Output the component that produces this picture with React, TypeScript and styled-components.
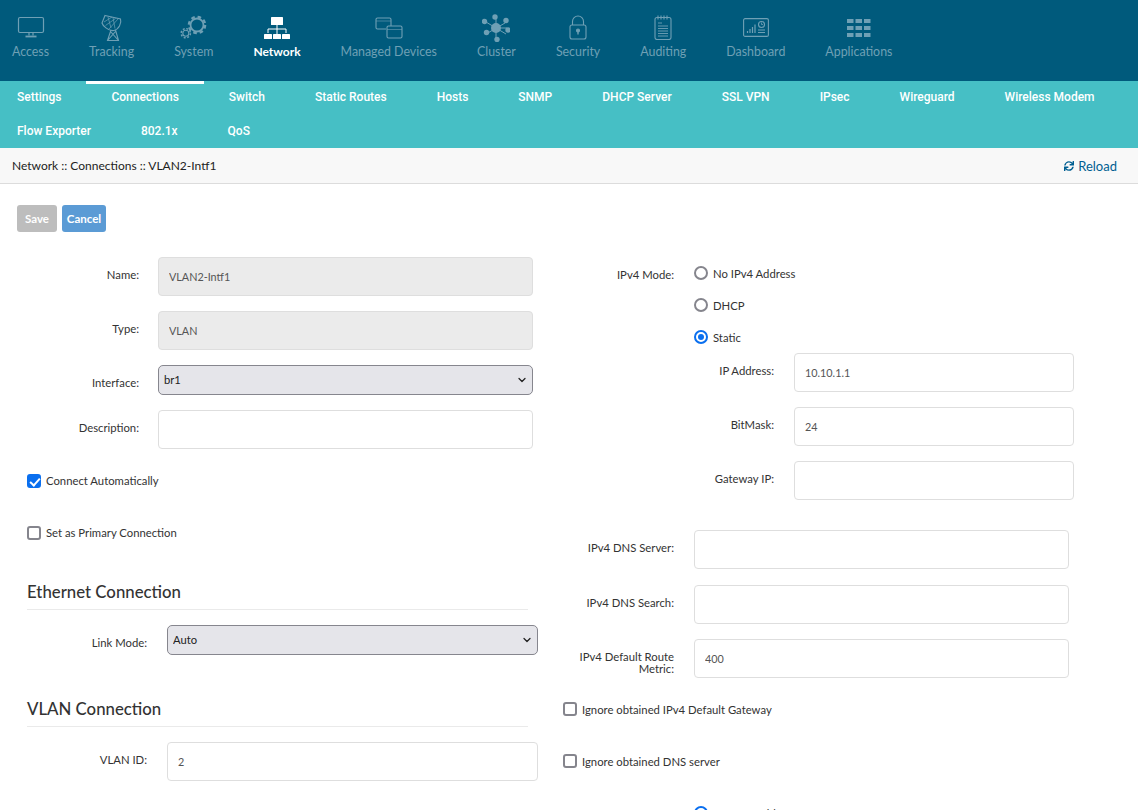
import styled, { createGlobalStyle } from 'styled-components';
import { FaSync } from 'react-icons/fa';
import { ChevronDown } from 'lucide-react';

const GlobalStyle = createGlobalStyle`
  html, body {
    margin: 0;
    height: 810px;
    overflow: hidden;
    background: #fff;
    font-family: Lato, "Liberation Sans", sans-serif;
    font-size: 11.3px;
    color: #333;
  }
  * { box-sizing: border-box; }
`;

const dim = '#6fa0b5';

const MonitorIcon = () => (
  <svg width="28" height="24" viewBox="0 0 28 24" fill="none" stroke="currentColor" strokeWidth="1.2">
    <rect x="1.5" y="1.5" width="25" height="15" rx="1.5" />
    <path d="M12 17v2.5M16 17v2.5" />
    <path d="M8.5 20.5h11" strokeWidth="1.8" />
  </svg>
);

const DishIcon = () => (
  <svg width="24" height="28" viewBox="0 0 24 28" fill="none" stroke="currentColor" strokeWidth="1.1">
    <path d="M5 1.5l15.5 3.5c1.5 4.5-2 10.5-6.5 11.5C8 17.5 2.5 11 2 9z" />
    <path d="M4 8l8-5M5.5 11.5l10-7M9 15l9-10M8 3l3 11M13 3.5l2 11" strokeWidth=".7" />
    <path d="M11 16l-3.5 10.5h11L15.5 16M7.5 26.5l8-9M18.5 26.5l-8-9" />
  </svg>
);

const GearsIcon = () => (
  <svg width="28" height="26" viewBox="0 0 28 26" fill="none" stroke="currentColor">
    <circle cx="17" cy="10" r="6.5" strokeWidth="1.8" />
    <circle cx="17" cy="10" r="8.2" strokeWidth="2.2" strokeDasharray="3.6 2.9" />
    <circle cx="5.8" cy="18.2" r="3" strokeWidth="1.1" />
    <circle cx="5.8" cy="18.2" r="4.6" strokeWidth="1.5" strokeDasharray="2 1.6" />
  </svg>
);

const SitemapIcon = () => (
  <svg width="26" height="22" viewBox="0 0 26 22" fill="currentColor">
    <rect x="7" y="0" width="12" height="8" rx=".6" />
    <rect x="0" y="17" width="8" height="5" rx=".6" />
    <rect x="9" y="17" width="8" height="5" rx=".6" />
    <rect x="18" y="17" width="8" height="5" rx=".6" />
    <path d="M13 8v9M4 16v-4h18v4" fill="none" stroke="currentColor" strokeWidth="1" />
  </svg>
);

const DevicesIcon = () => (
  <svg width="28" height="22" viewBox="0 0 28 22" fill="none" stroke="currentColor" strokeWidth="1.1">
    <path d="M11 12H2.5A1.5 1.5 0 0 1 1 10.500V2.500A1.500 1.500 0 0 1 2.500 1h12A1.500 1.500 0 0 1 16 2.500V9" />
    <rect x="12" y="9" width="15" height="12" rx="1.5" />
    <path d="M12 12.500h15M1 4h15" strokeWidth=".6" />
  </svg>
);

const ClusterIcon = () => (
  <svg width="28" height="28" viewBox="0 0 28 28" fill="currentColor" stroke="currentColor">
    <circle cx="14" cy="14" r="5" stroke="none" />
    <path d="M14 3v22M4 8l20 12M4 20l19-11M14 14l11 0" strokeWidth="1" fill="none" />
    <circle cx="13" cy="3" r="2.700" stroke="none" />
    <circle cx="24" cy="6.500" r="2.700" stroke="none" />
    <circle cx="26" cy="16" r="2.700" stroke="none" />
    <circle cx="15" cy="25.500" r="2.700" stroke="none" />
    <circle cx="4.500" cy="18.500" r="2.700" stroke="none" />
    <circle cx="2.500" cy="7.500" r="2.700" stroke="none" />
  </svg>
);

const LockIcon = () => (
  <svg width="18" height="25" viewBox="0 0 18 25" fill="none" stroke="currentColor" strokeWidth="1.1">
    <rect x="1" y="10" width="16" height="14" rx="2" />
    <path d="M3.500 10V6.500a5.500 5.500 0 0 1 11 0V10" />
    <circle cx="9" cy="15.500" r="1.500" fill="currentColor" />
    <path d="M9 16v3.500" strokeWidth="1.400" />
  </svg>
);

const NotepadIcon = () => (
  <svg width="18" height="25" viewBox="0 0 18 25" fill="none" stroke="currentColor" strokeWidth="1.1">
    <rect x="1" y="2.500" width="16" height="22" rx="2" />
    <path d="M4 .5v4M7 .5v4M10 .5v4M13 .5v4" />
    <path d="M4 8h4M4 11h10M4 13.500h10M4 16h10M4 18.500h10M4 21h10" strokeWidth=".9" />
  </svg>
);

const DashIcon = () => (
  <svg width="26" height="19" viewBox="0 0 26 19" fill="none" stroke="currentColor" strokeWidth="1.1">
    <rect x=".6" y=".6" width="24.800" height="17.800" rx="1.500" />
    <path d="M4.500 15v-2M7 15v-4M9.500 15v-6M12 15V6.500" strokeWidth="1.200" />
    <circle cx="18.500" cy="6.500" r="3" />
    <path d="M18.500 4.500v2h1.500" strokeWidth=".8" />
    <path d="M15 12h7M15 14.500h7" strokeWidth="1.100" />
  </svg>
);

const GridIcon = () => (
  <svg width="24" height="18" viewBox="0 0 24 18" fill="currentColor">
    {[0, 7, 14].map((y) =>
      [0, 8.5, 17].map((x) => <rect key={`${x}-${y}`} x={x} y={y} width="6.500" height="4" />),
    )}
  </svg>
);

const topItems = [
  { label: 'Access', icon: <MonitorIcon /> },
  { label: 'Tracking', icon: <DishIcon /> },
  { label: 'System', icon: <GearsIcon /> },
  { label: 'Network', icon: <SitemapIcon />, active: true },
  { label: 'Managed Devices', icon: <DevicesIcon /> },
  { label: 'Cluster', icon: <ClusterIcon /> },
  { label: 'Security', icon: <LockIcon /> },
  { label: 'Auditing', icon: <NotepadIcon /> },
  { label: 'Dashboard', icon: <DashIcon /> },
  { label: 'Applications', icon: <GridIcon /> },
];

const subItems = [
  'Settings', 'Connections', 'Switch', 'Static Routes', 'Hosts', 'SNMP', 'DHCP Server',
  'SSL VPN', 'IPsec', 'Wireguard', 'Wireless Modem', 'Flow Exporter', '802.1x', 'QoS',
];

const App = () => (
  <>
    <GlobalStyle />
    <TopNav>
      {topItems.map((item) => (
        <TopItem key={item.label} $active={item.active}>
          <IconSlot>{item.icon}</IconSlot>
          {item.label}
        </TopItem>
      ))}
    </TopNav>
    <SubNav>
      {subItems.map((name) => (
        <SubItem key={name} $active={name === 'Connections'}>{name}</SubItem>
      ))}
    </SubNav>
    <Crumbs>
      <span>Network :: Connections :: VLAN2-Intf1</span>
      <ReloadLink><FaSync size={10} /> Reload</ReloadLink>
    </Crumbs>
    <Toolbar>
      <ActionButton $color="#bdbdbd" $width={40}>Save</ActionButton>
      <ActionButton $color="#5b9bd5" $width={44}>Cancel</ActionButton>
    </Toolbar>
    <Form>
      <Column>
        <Row $gap={19}>
          <Label $width={139}>Name:</Label>
          <TextBox $width={375} disabled defaultValue="VLAN2-Intf1" />
        </Row>
        <Row $gap={19}>
          <Label $width={139}>Type:</Label>
          <TextBox $width={375} disabled defaultValue="VLAN" />
        </Row>
        <Row $gap={19}>
          <Label $width={139}>Interface:</Label>
          <SelectBox width={375} value="br1" />
        </Row>
        <Row $gap={19}>
          <Label $width={139}>Description:</Label>
          <TextBox $width={375} />
        </Row>
        <CheckRow $left={27}>
          <Check type="checkbox" defaultChecked /> Connect Automatically
        </CheckRow>
        <CheckRow $left={27}>
          <Check type="checkbox" /> Set as Primary Connection
        </CheckRow>
        <Section>
          <Heading>Ethernet Connection</Heading>
          <Row>
            <Label $width={147}>Link Mode:</Label>
            <SelectBox width={371} value="Auto" />
          </Row>
        </Section>
        <Section>
          <Heading>VLAN Connection</Heading>
          <Row>
            <Label $width={147}>VLAN ID:</Label>
            <TextBox $width={371} defaultValue="2" />
          </Row>
        </Section>
      </Column>
      <Column>
        <ModeRow>
          <Label $width={121}>IPv4 Mode:</Label>
          <RadioGroup>
            <RadioRow><Radio type="radio" name="mode" /> No IPv4 Address</RadioRow>
            <RadioRow><Radio type="radio" name="mode" /> DHCP</RadioRow>
            <RadioRow><Radio type="radio" name="mode" defaultChecked /> Static</RadioRow>
          </RadioGroup>
        </ModeRow>
        <Row>
          <Label $width={221}>IP Address:</Label>
          <TextBox $width={280} defaultValue="10.10.1.1" />
        </Row>
        <Row>
          <Label $width={221}>BitMask:</Label>
          <TextBox $width={280} defaultValue="24" />
        </Row>
        <DnsGap>
          <Row>
            <Label $width={221}>Gateway IP:</Label>
            <TextBox $width={280} />
          </Row>
        </DnsGap>
        <DnsRow>
          <Label $width={121}>IPv4 DNS Server:</Label>
          <TextBox $width={375} />
        </DnsRow>
        <DnsRow>
          <Label $width={121}>IPv4 DNS Search:</Label>
          <TextBox $width={375} />
        </DnsRow>
        <Row>
          <Label $width={121}>IPv4 Default Route Metric:</Label>
          <TextBox $width={375} defaultValue="400" />
        </Row>
        <CheckRow $left={10} $top={24} $line={16}>
          <Check type="checkbox" /> Ignore obtained IPv4 Default Gateway
        </CheckRow>
        <CheckRow $left={10} $line={16}>
          <Check type="checkbox" /> Ignore obtained DNS server
        </CheckRow>
        <LastRadio>
          <RadioRow><Radio type="radio" name="v6" defaultChecked /> No IPv6 Address</RadioRow>
        </LastRadio>
      </Column>
    </Form>
  </>
);

export default App;

const SelectBox = ({ width, value }: { width: number; value: string }) => (
  <SelectWrap $width={width}>
    <NativeSelect defaultValue={value}>
      <option>{value}</option>
    </NativeSelect>
    <Chevron><ChevronDown size={12} strokeWidth={2.5} /></Chevron>
  </SelectWrap>
);

const TopNav = styled.nav`
  display: flex;
  gap: 40px;
  height: 81px;
  padding-left: 12px;
  background: #005a7c;
  font-size: 12.4px;
`;

const TopItem = styled.div<{ $active?: boolean }>`
  display: flex;
  flex-direction: column;
  align-items: center;
  color: ${(props) => (props.$active ? '#fff' : dim)};
  font-weight: ${(props) => (props.$active ? 700 : 400)};
  font-size: ${(props) => (props.$active ? '12px' : 'inherit')};
  line-height: 16px;
  padding-top: 13px;
`;

const IconSlot = styled.div`
  display: flex;
  align-items: center;
  justify-content: center;
  height: 29px;
  margin-bottom: 2px;
`;

const SubNav = styled.div`
  display: flex;
  flex-wrap: wrap;
  margin-left: -8px;
  background: #46bfc5;
  height: 67px;
  color: #fff;
  font-family: Roboto, sans-serif;
  font-weight: 500;
  font-size: 12px;
`;

const SubItem = styled.div<{ $active?: boolean }>`
  position: relative;
  height: 33px;
  line-height: 33px;
  padding: 0 25px;
  &::before {
    content: '';
    display: ${(props) => (props.$active ? 'block' : 'none')};
    position: absolute;
    top: 0;
    left: 0;
    right: 0;
    height: 3px;
    background: #fff;
  }
`;

const Crumbs = styled.div`
  display: flex;
  align-items: center;
  justify-content: space-between;
  height: 36px;
  padding: 0 21px 0 12px;
  background: #f8f8f8;
  border-bottom: 1px solid #dcdcdc;
  color: #222;
  font-size: 12px;
`;

const ReloadLink = styled.span`
  display: flex;
  align-items: center;
  gap: 4px;
  color: #005f92;
  font-size: 13px;
`;

const Toolbar = styled.div`
  display: flex;
  gap: 5px;
  padding: 21px 0 25px 17px;
`;

const ActionButton = styled.button<{ $color: string; $width: number }>`
  width: ${(props) => props.$width}px;
  height: 27px;
  padding: 0;
  border: 0;
  border-radius: 3px;
  background: ${(props) => props.$color};
  color: #fff;
  font: 700 11.500px Lato, sans-serif;
`;

const Form = styled.form`
  display: grid;
  grid-template-columns: 553px 1fr;
  overflow: hidden;
`;

const Column = styled.div`
  display: block;
`;

const Row = styled.div<{ $gap?: number }>`
  display: flex;
  gap: ${(props) => props.$gap ?? 20}px;
  margin-bottom: 15px;
`;

const ModeRow = styled(Row)`
  margin-bottom: 0;
`;

const DnsRow = styled(Row)`
  margin-bottom: 15.500px;
`;

const DnsGap = styled.div`
  padding-bottom: 15px;
`;

const Label = styled.label<{ $width: number }>`
  flex: none;
  width: ${(props) => props.$width}px;
  padding-top: 12px;
  line-height: 12px;
  text-align: right;
  color: #333;
`;

const TextBox = styled.input<{ $width: number }>`
  width: ${(props) => props.$width}px;
  height: 39px;
  padding: 0 10px;
  border: 1px solid #dedede;
  border-radius: 4px;
  background: #fff;
  color: #555;
  font: 10.800px Lato, sans-serif;
  &:disabled {
    background: #ebebeb;
    opacity: 1;
  }
`;

const SelectWrap = styled.div<{ $width: number }>`
  position: relative;
  width: ${(props) => props.$width}px;
  height: 30px;
`;

const NativeSelect = styled.select`
  appearance: none;
  width: 100%;
  height: 100%;
  padding: 0 0 1px 5px;
  border: 1px solid #86868e;
  border-radius: 5px;
  background: #e5e5ea;
  color: #222;
  font: 11.200px Lato, sans-serif;
`;

const Chevron = styled.span`
  position: absolute;
  top: 9px;
  right: 5px;
  color: #222;
  line-height: 0;
`;

const CheckRow = styled.label<{ $left: number; $top?: number; $line?: number }>`
  display: flex;
  align-items: flex-start;
  gap: 5px;
  height: 14px;
  margin: ${(props) => props.$top ?? 25}px 0 38px ${(props) => props.$left}px;
  line-height: ${(props) => props.$line ?? 14}px;
  color: #333;
`;

const Check = styled.input`
  appearance: none;
  position: relative;
  flex: none;
  width: 14px;
  height: 14px;
  margin: 0;
  border: 2px solid #85858d;
  border-radius: 3px;
  background: #fff;
  &:checked {
    background: #0a6fef;
    border-color: #0a6fef;
  }
  &:checked::after {
    content: '';
    position: absolute;
    left: 3px;
    top: 0;
    width: 4px;
    height: 8px;
    border: solid #fff;
    border-width: 0 2px 2px 0;
    transform: rotate(42deg);
  }
`;

const Section = styled.section`
  padding-bottom: 25px;
`;

const Heading = styled.h3`
  width: 501px;
  margin: 0 0 15px 27px;
  padding-bottom: 3px;
  border-bottom: 1px solid #eaeaea;
  font-size: 16.800px;
  font-weight: 500;
  line-height: 28px;
  color: #333;
`;

const RadioGroup = styled.div`
  padding-top: 9px;
`;

const RadioRow = styled.label`
  display: flex;
  align-items: flex-start;
  gap: 5px;
  height: 14px;
  margin-bottom: 18px;
  line-height: 16px;
  &:last-child {
    margin-bottom: 9px;
  }
`;

const Radio = styled.input`
  appearance: none;
  position: relative;
  flex: none;
  width: 14px;
  height: 14px;
  margin: 0;
  border: 2px solid #85858d;
  border-radius: 50%;
  background: #fff;
  &:checked {
    border-color: #0a6fef;
  }
  &:checked::after {
    content: '';
    position: absolute;
    inset: 2px;
    border-radius: 50%;
    background: #0a6fef;
  }
`;

const LastRadio = styled.div`
  margin-left: 141px;
`;
